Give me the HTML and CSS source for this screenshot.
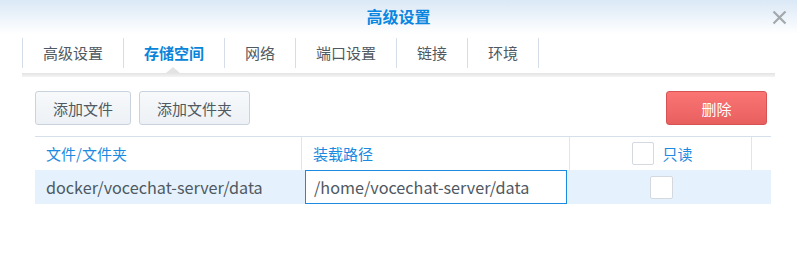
FILE: index.html
```html
<!DOCTYPE html>
<html lang="zh-CN">
<head>
  <meta charset="UTF-8" />
  <title>高级设置</title>
  <link rel="stylesheet" href="styles.css">
</head>
<body>

<div class="dialog">
  <div class="header">
    <span class="title">高级设置</span>
    <span class="close">
      <svg width="15" height="15" viewBox="0 0 15 15"><path d="M1.5 1.5 L13.5 13.5 M13.5 1.5 L1.5 13.5" stroke="#a3a8ad" stroke-width="2.2"/></svg>
    </span>
  </div>

  <div class="tabs">
    <div class="tab">高级设置</div>
    <div class="tab active">存储空间</div>
    <div class="tab">网络</div>
    <div class="tab">端口设置</div>
    <div class="tab">链接</div>
    <div class="tab">环境</div>
  </div>
  <div class="tab-line"><span class="notch"></span></div>

  <div class="content">
    <div class="toolbar">
      <button class="btn">添加文件</button>
      <button class="btn">添加文件夹</button>
      <button class="btn btn-red">删除</button>
    </div>

    <div class="table">
      <div class="row head">
        <div class="cell c1">文件/文件夹</div>
        <div class="cell c2">装载路径</div>
        <div class="cell c3"><span class="check"></span>只读</div>
        <div class="cell c4"></div>
      </div>
      <div class="row selected">
        <div class="cell c1 latin">docker/vocechat-server/data</div>
        <div class="cell c2"><input class="path latin" type="text" value="/home/vocechat-server/data"></div>
        <div class="cell c3"><span class="check big"></span></div>
        <div class="cell c4"></div>
      </div>
    </div>
  </div>
</div>

</body>
</html>
```

FILE: styles.css
```css
body {
  margin: 0;
  background: #fff;
  font-family: "Noto Sans CJK SC", "Noto Sans", sans-serif;
  color: #4f5962;
  font-size: 15px;
}
.dialog {
  width: 797px;
  height: 276px;
  background: #fff;
}
.header {
  position: relative;
  height: 34px;
  background: linear-gradient(#dae8f6, #fff);
  text-align: center;
}
.title {
  display: inline-block;
  line-height: 32px;
  font-size: 16px;
  font-weight: bold;
  color: #0a86e0;
}
.close {
  position: absolute;
  right: 10px;
  top: 8px;
}
.tabs {
  display: flex;
  margin: 4px 0 0 22px;
  height: 30px;
}
.tab {
  padding: 0 20px;
  line-height: 30px;
  border-left: 1px solid #d5dee8;
  color: #4f5962;
}
.tab:last-child {
  border-right: 1px solid #d5dee8;
}
.tab.active {
  color: #0a84d8;
  font-weight: bold;
}
.tab-line {
  position: relative;
  margin: 5px 22px 0 22px;
  height: 4px;
  background: linear-gradient(#e3e3e3, #f4f4f4);
}
.notch {
  position: absolute;
  left: 144px;
  top: -6px;
  width: 0;
  height: 0;
  border-left: 7px solid transparent;
  border-right: 7px solid transparent;
  border-bottom: 6px solid #e3e3e3;
}
.content {
  padding: 14px 26px 0 35px;
}
.toolbar {
  display: flex;
  gap: 8px;
  margin-right: 4px;
}
.btn {
  height: 34px;
  padding: 0 17px;
  font-family: inherit;
  font-size: 15px;
  color: #4f5962;
  border: 1px solid #c9d3dd;
  border-radius: 3px;
  background: linear-gradient(#f7f9fb, #edf1f5);
}
.btn-red {
  margin-left: auto;
  width: 101px;
  color: #fff;
  border-color: #d65353;
  background: linear-gradient(#fb7575, #e85f5f);
}
.table {
  margin-top: 11px;
  border-top: 1px solid #d5e0ea;
}
.row {
  display: flex;
  height: 33px;
}
.row.head .cell {
  border-right: 1px solid #dde6ee;
  color: #1b8ae0;
}
.row.selected {
  height: 34px;
  background: #e5f2fd;
}
.cell {
  display: flex;
  align-items: center;
  padding-left: 11px;
  box-sizing: border-box;
}
.latin {
  font-size: 16.2px;
}
.c1 { width: 267px; }
.c2 { width: 268px; padding-left: 3px; }
.row.head .c2 { padding-left: 11px; }
.c3 { width: 182px; justify-content: center; padding-left: 0; }
.row.head .c3 { padding-left: 4px; }
.c4 { width: 19px; }
.row.head .c4 { border-right: none; }
.check {
  width: 20px;
  height: 21px;
  border: 1px solid #d3d9df;
  border-radius: 2px;
  background: #fff;
  margin-right: 8px;
}
.check.big {
  width: 21px;
  height: 21px;
  margin-right: 0;
  margin-left: 1px;
}
.path {
  width: 262px;
  height: 34px;
  box-sizing: border-box;
  border: 1px solid #1b8ae0;
  padding: 0 8px;
  font-family: inherit;
  color: #4f5962;
  outline: none;
}
```
